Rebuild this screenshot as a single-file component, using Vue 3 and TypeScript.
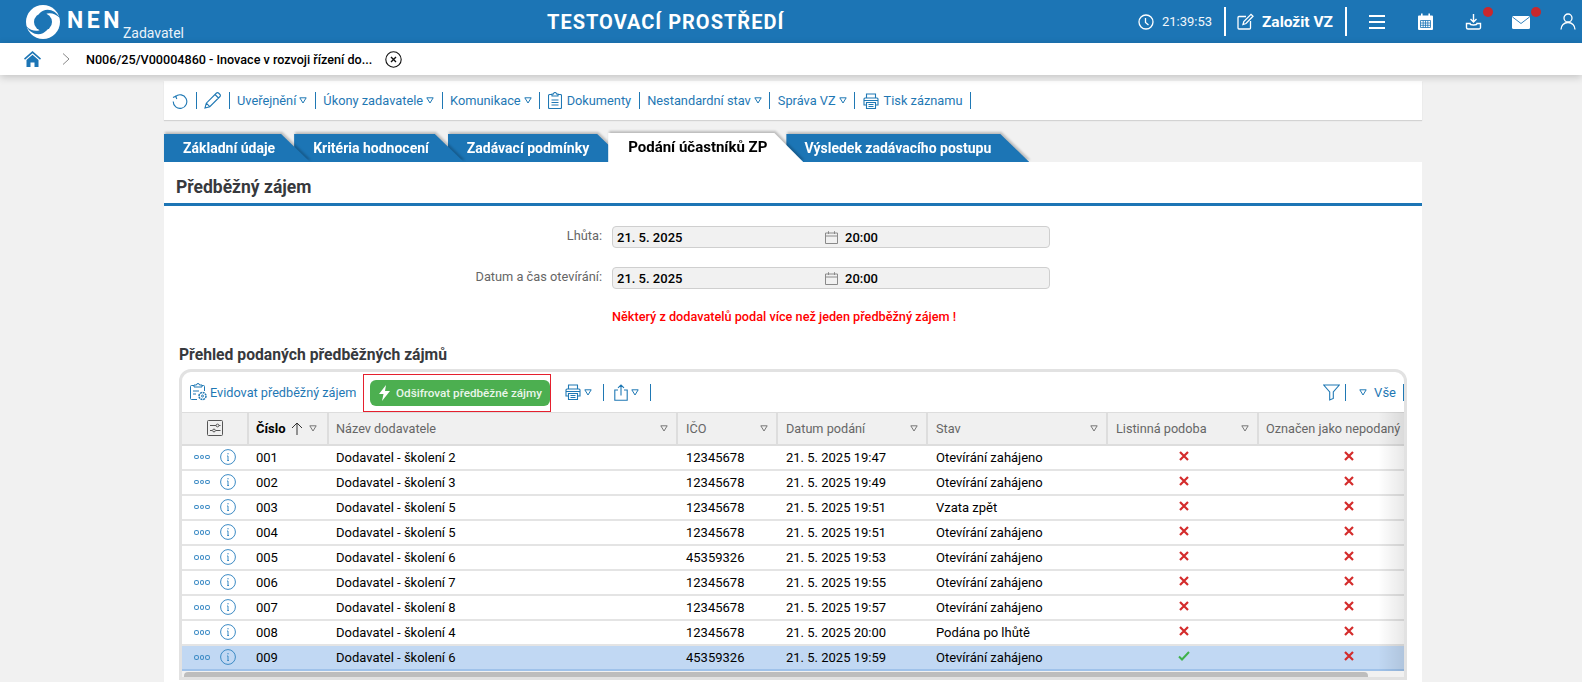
<script setup lang="ts">
interface Row { no: string; name: string; ico: string; date: string; state: string; paper: boolean; selected?: boolean }

const menu = [
  { label: 'Uveřejnění', tri: true, icon: '' },
  { label: 'Úkony zadavatele', tri: true, icon: '' },
  { label: 'Komunikace', tri: true, icon: '' },
  { label: 'Dokumenty', tri: false, icon: 'doc' },
  { label: 'Nestandardní stav', tri: true, icon: '' },
  { label: 'Správa VZ', tri: true, icon: '' },
  { label: 'Tisk záznamu', tri: false, icon: 'print' },
]

const tabs = [
  { label: 'Základní údaje', cls: 't1' },
  { label: 'Kritéria hodnocení', cls: 't2' },
  { label: 'Zadávací podmínky', cls: 't3' },
  { label: 'Podání účastníků ZP', cls: 't4 active' },
  { label: 'Výsledek zadávacího postupu', cls: 't5' },
]

const dates = [
  { label: 'Lhůta:', date: '21. 5. 2025', time: '20:00' },
  { label: 'Datum a čas otevírání:', date: '21. 5. 2025', time: '20:00' },
]

const columns = [
  { label: 'Název dodavatele', cls: 'c-name' },
  { label: 'IČO', cls: 'c-ico' },
  { label: 'Datum podání', cls: 'c-date' },
  { label: 'Stav', cls: 'c-state' },
  { label: 'Listinná podoba', cls: 'c-paper' },
]

const rows: Row[] = [
  { no: '001', name: 'Dodavatel - školení 2', ico: '12345678', date: '21. 5. 2025 19:47', state: 'Otevírání zahájeno', paper: false },
  { no: '002', name: 'Dodavatel - školení 3', ico: '12345678', date: '21. 5. 2025 19:49', state: 'Otevírání zahájeno', paper: false },
  { no: '003', name: 'Dodavatel - školení 5', ico: '12345678', date: '21. 5. 2025 19:51', state: 'Vzata zpět', paper: false },
  { no: '004', name: 'Dodavatel - školení 5', ico: '12345678', date: '21. 5. 2025 19:51', state: 'Otevírání zahájeno', paper: false },
  { no: '005', name: 'Dodavatel - školení 6', ico: '45359326', date: '21. 5. 2025 19:53', state: 'Otevírání zahájeno', paper: false },
  { no: '006', name: 'Dodavatel - školení 7', ico: '12345678', date: '21. 5. 2025 19:55', state: 'Otevírání zahájeno', paper: false },
  { no: '007', name: 'Dodavatel - školení 8', ico: '12345678', date: '21. 5. 2025 19:57', state: 'Otevírání zahájeno', paper: false },
  { no: '008', name: 'Dodavatel - školení 4', ico: '12345678', date: '21. 5. 2025 20:00', state: 'Podána po lhůtě', paper: false },
  { no: '009', name: 'Dodavatel - školení 6', ico: '45359326', date: '21. 5. 2025 19:59', state: 'Otevírání zahájeno', paper: true, selected: true },
]
</script>

<template>
  <div class="page">
    <header class="topbar">
      <div class="brand">
        <svg class="logo" viewBox="0 0 36 36" width="36" height="36">
          <circle cx="18" cy="18" r="17" fill="#fff" />
          <circle cx="18" cy="18" r="9" fill="#1c75b5" />
          <path d="M14 10C20 3 30 5 35 14 30 9 24 8 20 10.500z" fill="#1c75b5" />
          <path d="M22 26C16 33 6 31 1 22 6 27 12 28 16 25.500z" fill="#1c75b5" />
        </svg>
        <span class="nen">NEN</span>
        <span class="role">Zadavatel</span>
      </div>
      <div class="env">TESTOVACÍ PROSTŘEDÍ</div>
      <div class="top-right">
        <svg class="ic-clock" viewBox="0 0 16 16" width="16" height="16" fill="none" stroke="#fff" stroke-width="1.300">
          <circle cx="8" cy="8" r="7" /><path d="M7.500 4v4.500l3 2.500" />
        </svg>
        <span class="time">21:39:53</span>
        <i class="top-sep"></i>
        <svg class="ic-edit" viewBox="0 0 17 17" width="17" height="17" fill="none" stroke="#fff" stroke-width="1.300">
          <path d="M9 3.500H2a1 1 0 0 0-1 1V15a1 1 0 0 0 1 1h10.500a1 1 0 0 0 1-1V8" />
          <path d="M6 11.500l.8-3L14 1.300l2 2-7 7.200z" />
        </svg>
        <span class="create">Založit VZ</span>
        <i class="top-sep"></i>
        <span class="top-icon first">
          <svg viewBox="0 0 16 14" width="16" height="14" fill="#fff"><rect y="0" width="16" height="2" /><rect y="6" width="16" height="2" /><rect y="12" width="16" height="2" /></svg>
        </span>
        <span class="top-icon">
          <svg viewBox="0 0 17 17" width="17" height="17"><path d="M1 3.500a1 1 0 0 1 1-1h13a1 1 0 0 1 1 1V16a1 1 0 0 1-1 1H2a1 1 0 0 1-1-1z" fill="#fff" /><rect x="4" y="0.500" width="1.600" height="3.500" fill="#fff" /><rect x="11.400" y="0.500" width="1.600" height="3.500" fill="#fff" /><path d="M3.500 7.500h10v7h-10zM3.500 10h10M3.500 12.300h10M6.200 7.500v7M8.500 7.500v7M10.800 7.500v7" fill="none" stroke="#1c75b5" stroke-width=".8" /></svg>
        </span>
        <span class="top-icon">
          <svg viewBox="0 0 17 17" width="17" height="17" fill="none" stroke="#fff" stroke-width="1.400"><path d="M8.500 1v7.500M5.500 6l3 3 3-3" /><path d="M5 10.500H1.500v4a1.500 1.500 0 0 0 1.500 1.500h11a1.500 1.500 0 0 0 1.500-1.500v-4H12c0 2-7 2-7 0z" /></svg>
          <b class="dot"></b>
        </span>
        <span class="top-icon">
          <svg viewBox="0 0 18 14" width="18" height="14"><rect y="1" width="18" height="13" rx="1.500" fill="#fff" /><path d="M.5 2l8.500 6.500L17.500 2" fill="none" stroke="#1c75b5" stroke-width=".9" /></svg>
          <b class="dot"></b>
        </span>
        <span class="top-icon last">
          <svg viewBox="0 0 16 17" width="16" height="17" fill="none" stroke="#fff" stroke-width="1.300"><circle cx="8" cy="5" r="4" /><path d="M1 16.500c0-4 3-7 7-7s7 3 7 7" /></svg>
        </span>
      </div>
    </header>

    <nav class="crumbs">
      <svg class="home" viewBox="0 0 17 16" width="17" height="16" fill="#1c75b5">
        <path d="M8.500 0L0 7.500l1 1.200 7.500-6.500 7.500 6.500 1-1.200z" />
        <path d="M2.500 9l6-5.200 6 5.200v7H10.500v-4.500h-4V16h-4z" />
      </svg>
      <svg class="chev" viewBox="0 0 8 12" width="8" height="12" fill="none" stroke="#888" stroke-width="1"><path d="M1 .5l6 5.500-6 5.500" /></svg>
      <span class="crumb-text">N006/25/V00004860 - Inovace v rozvoji řízení do...</span>
      <svg class="crumb-close" viewBox="0 0 17 17" width="17" height="17" fill="none" stroke="#111" stroke-width="1.100"><circle cx="8.500" cy="8.500" r="7.700" /><path d="M6 6l5 5M11 6l-5 5" stroke-width="1.400" /></svg>
    </nav>

    <main class="main">
      <div class="toolbar">
        <svg class="tool-icon" viewBox="0 0 16 16" width="16" height="16" fill="none" stroke="#1f78b4" stroke-width="1.100"><path d="M3.500 3.500A6.800 6.800 0 1 1 1.200 8.500" /><path d="M1 4.500l2.700-1.300L4.800 6" /></svg>
        <i class="tool-sep"></i>
        <svg class="tool-icon" viewBox="0 0 17 17" width="17" height="17" fill="none" stroke="#1f78b4" stroke-width="1.100"><path d="M1 16l1.300-4.800L12.500 1a1.400 1.400 0 0 1 2 0l1.500 1.500a1.400 1.400 0 0 1 0 2L5.800 14.700zM2.300 11.200l3.500 3.500M11 2.500l3.500 3.500" /></svg>
        <i class="tool-sep"></i>
        <template v-for="item in menu" :key="item.label">
          <svg v-if="item.icon === 'doc'" class="item-icon" viewBox="0 0 14 17" width="14" height="17" fill="none" stroke="#1f78b4" stroke-width="1.100"><path d="M4 2.500H1.500a1 1 0 0 0-1 1V15.500a1 1 0 0 0 1 1h11a1 1 0 0 0 1-1V3.500a1 1 0 0 0-1-1H10" /><path d="M4 4V2h1.500a1.500 1.500 0 0 1 3 0H10v2zM3.500 8h7M3.500 10.500h7M3.500 13h7" /></svg>
          <svg v-if="item.icon === 'print'" class="item-icon" viewBox="0 0 16 16" width="16" height="16" fill="none" stroke="#1f78b4" stroke-width="1.100"><path d="M3.500 5V1h9v4M3.500 12H1V6a1 1 0 0 1 1-1h12a1 1 0 0 1 1 1v6h-2.500" /><path d="M3.500 9.500h9v6h-9zM5.500 11.500h5M5.500 13.500h5M1 7.500h14" /></svg>
          <span class="item-label">{{ item.label }}</span>
          <svg v-if="item.tri" class="tri blue" viewBox="0 0 8 7" width="8" height="7"><path d="M.8.800h6.400L4 6z" /></svg>
          <i class="tool-sep"></i>
        </template>
      </div>

      <div class="tabs">
        <div v-for="t in tabs" :key="t.label" class="tab" :class="t.cls">
          <span class="tab-face">{{ t.label }}</span>
        </div>
      </div>

      <section class="content">
        <h1 class="title">Předběžný zájem</h1>

        <div class="form">
          <div v-for="d in dates" :key="d.label" class="form-row">
            <label class="form-label">{{ d.label }}</label>
            <div class="date-input">
              <span class="date-val">{{ d.date }}</span>
              <svg class="cal" viewBox="0 0 13 13" width="13" height="13" fill="none" stroke="#8a8a8a" stroke-width="1"><path d="M.5 2h12v10.500H.5zM.5 5h12M3.500 .2V3M9.500 .2V3" /></svg>
              <span class="time-val">{{ d.time }}</span>
            </div>
          </div>
          <p class="warning">Některý z dodavatelů podal více než jeden předběžný zájem !</p>
        </div>

        <h2 class="sub">Přehled podaných předběžných zájmů</h2>

        <div class="widget">
          <div class="grid-bar">
            <svg class="ev-icon" viewBox="0 0 17 18" width="17" height="18" fill="none" stroke="#1f78b4" stroke-width="1"><path d="M4 2.500H1.500a1 1 0 0 0-1 1v12a1 1 0 0 0 1 1H7M12 2.500h1.500a1 1 0 0 1 1 1V8" /><path d="M4 4V2h2.500a1.500 1.500 0 0 1 3 0H12v2zM3 8h6M3 11h3" /><circle cx="12.500" cy="13" r="3.500" stroke-dasharray="2 .7" stroke-width="1.500" /><circle cx="12.500" cy="13" r="1" /></svg>
            <span class="ev-label">Evidovat předběžný zájem</span>
            <div class="action-frame">
              <button class="decrypt" type="button">
                <svg viewBox="0 0 11 16" width="11" height="16" fill="#fff"><path d="M7 0L0 9h4.500L3 16l8-10H6z" /></svg>
                <span>Odšifrovat předběžné zájmy</span>
              </button>
            </div>
            <svg class="bar-print" viewBox="0 0 16 16" width="16" height="16" fill="none" stroke="#1f78b4" stroke-width="1.100"><path d="M3.500 5V1h9v4M3.500 12H1V6a1 1 0 0 1 1-1h12a1 1 0 0 1 1 1v6h-2.500" /><path d="M3.500 9.500h9v6h-9zM5.500 11.500h5M5.500 13.500h5M1 7.500h14" /></svg>
            <svg class="tri blue bar-tri" viewBox="0 0 8 7" width="8" height="7"><path d="M.8.800h6.400L4 6z" /></svg>
            <i class="tool-sep bar-sep"></i>
            <svg class="bar-share" viewBox="0 0 14 17" width="14" height="17" fill="none" stroke="#1f78b4" stroke-width="1.100"><path d="M4 6H.8v10.200h12.400V6H10M7 11.500V1M4 3.800L7 1l3 2.800" /></svg>
            <svg class="tri blue bar-tri" viewBox="0 0 8 7" width="8" height="7"><path d="M.8.800h6.400L4 6z" /></svg>
            <i class="tool-sep bar-sep"></i>
            <svg class="filter" viewBox="0 0 17 17" width="17" height="17" fill="none" stroke="#1f78b4" stroke-width="1.100"><path d="M.7 1h15.600l-6 7v6.500L6.700 16V8z" /></svg>
            <i class="tool-sep filter-sep"></i>
            <svg class="tri blue all-tri" viewBox="0 0 8 7" width="8" height="7"><path d="M.8.800h6.400L4 6z" /></svg>
            <span class="all">Vše</span>
            <i class="tool-sep all-sep"></i>
          </div>

          <div class="table">
            <div class="tr head">
              <div class="th c-act">
                <svg viewBox="0 0 16 16" width="16" height="16" fill="none" stroke="#555" stroke-width="1"><rect x=".5" y=".5" width="15" height="15" rx="1" /><path d="M3 5.500h6M12 5.500h1.500M3 10.500h2M9 10.500h4.500" /><circle cx="10.500" cy="5.500" r="1.400" /><circle cx="7" cy="10.500" r="1.400" /></svg>
              </div>
              <div class="th c-no strong">
                <span>Číslo</span>
                <svg class="sort" viewBox="0 0 12 13" width="12" height="13" fill="none" stroke="#333" stroke-width="1"><path d="M6 13V1M1 6l5-5 5 5" /></svg>
                <svg class="tri gray" viewBox="0 0 8 7" width="8" height="7"><path d="M.8.800h6.400L4 6z" /></svg>
              </div>
              <div v-for="c in columns" :key="c.label" class="th spread" :class="c.cls">
                <span>{{ c.label }}</span>
                <svg class="tri gray" viewBox="0 0 8 7" width="8" height="7"><path d="M.8.800h6.400L4 6z" /></svg>
              </div>
              <div class="th c-flag nosep"><span>Označen jako nepodaný</span></div>
            </div>

            <div v-for="r in rows" :key="r.no" class="tr" :class="{ selected: r.selected }">
              <div class="td c-act">
                <span class="dots"><i></i><i></i><i></i></span>
                <svg class="info" viewBox="0 0 16 16" width="16" height="16" fill="none" stroke="#3b8ac4" stroke-width="1"><circle cx="8" cy="8" r="7.400" /><path d="M8 7v4.500M7 7h1M7.200 11.500h1.800" /><path d="M8 4.200v1" stroke-width="1.400" /></svg>
              </div>
              <div class="td c-no">{{ r.no }}</div>
              <div class="td c-name">{{ r.name }}</div>
              <div class="td c-ico">{{ r.ico }}</div>
              <div class="td c-date">{{ r.date }}</div>
              <div class="td c-state">{{ r.state }}</div>
              <div class="td c-paper center">
                <svg v-if="r.paper" viewBox="0 0 12 10" width="12" height="10" fill="none" stroke="#3fb24a" stroke-width="2"><path d="M1 5.500l3 3L11 1" /></svg>
                <svg v-else viewBox="0 0 10 10" width="10" height="10" fill="none" stroke="#d42b2b" stroke-width="2.200"><path d="M1 1l8 8M9 1l-8 8" /></svg>
              </div>
              <div class="td c-flag center">
                <svg viewBox="0 0 10 10" width="10" height="10" fill="none" stroke="#d42b2b" stroke-width="2.200"><path d="M1 1l8 8M9 1l-8 8" /></svg>
              </div>
            </div>
            <div class="fade"></div>
          </div>

          <div class="scroll"><div class="thumb"></div></div>
        </div>
      </section>
    </main>
  </div>
</template>

<style>
html, body { margin: 0; background: #f1f1f1; overflow: hidden; }
</style>

<style scoped>
.page { width: 1582px; height: 682px; overflow: hidden; font-family: Roboto, "Liberation Sans", sans-serif; font-size: 13px; color: #000; background: #f1f1f1; }

.topbar { height: 43px; background: #1c75b5; display: flex; align-items: center; color: #fff; }
.brand { width: 547px; flex: none; height: 43px; display: flex; position: relative; }
.logo { margin: 4px 0 0 25px; }
.nen { margin: 7px 0 0 6px; font-size: 23px; font-weight: 700; letter-spacing: 3.500px; line-height: 28px; }
.role { margin: 24px 0 0 0; font-size: 14px; line-height: 18px; color: #eaf3fa; }
.env { font-size: 20px; font-weight: 700; letter-spacing: 1px; }
.top-right { margin-left: auto; display: flex; align-items: center; height: 43px; }
.time { margin-left: 8px; font-size: 13px; color: #f2f7fb; width: 50px; }
.top-sep { width: 2px; height: 29px; background: #fff; margin-left: 12px; }
.ic-edit { margin-left: 11px; }
.create { margin-left: 8px; font-size: 15.500px; font-weight: 700; }
.top-icon { width: 48px; height: 43px; display: flex; align-items: center; justify-content: center; position: relative; }
.top-icon.first { margin-left: 6px; }
.top-icon.last { width: 37px; }
.top-icon.last svg { margin-left: 9px; }
.dot { position: absolute; width: 10px; height: 10px; border-radius: 50%; background: #c9282d; top: 7px; left: 34px; }

.crumbs { height: 32px; background: #fff; display: flex; align-items: center; box-shadow: 0 2px 8px rgba(0, 0, 0, .2); position: relative; padding-left: 24px; }
.chev { margin-left: 21px; }
.crumb-text { margin-left: 16px; font-weight: 500; font-size: 12.600px; width: 287px; white-space: nowrap; }
.crumb-close { margin-left: 12px; }

.main { width: 1258px; margin: 6px 0 0 164px; }
.toolbar { height: 39px; background: #fff; display: flex; align-items: center; box-shadow: 0 1px 1px rgba(0, 0, 0, .12); padding-left: 8px; color: #1f78b4; }
.tool-sep { width: 1px; height: 17px; background: #1f78b4; margin: 0 7.500px; flex: none; }
.item-label { white-space: nowrap; font-size: 12.800px; }
.item-icon { margin-right: 5px; }
.tri { flex: none; }
.tri path { fill: none; stroke-width: 1; }
.tri.blue { margin-left: 3px; }
.tri.blue path { stroke: #1f78b4; }
.tri.gray path { stroke: #777; }

.tabs { margin-top: 13px; height: 29px; display: flex; align-items: flex-end; }
.tab { position: relative; height: 28px; filter: drop-shadow(1px -1.500px 1px rgba(0, 0, 0, .22)); }
.tab-face { display: block; height: 100%; line-height: 29px; background: #1c75b5; color: #fff; font-weight: 700; font-size: 14px; white-space: nowrap; padding: 0 37px 0 19px; clip-path: polygon(0 0, calc(100% - 29px) 0, 100% 100%, 0 100%); }
.t1 { z-index: 5; }
.t2 { z-index: 4; margin-left: -16px; }
.t3 { z-index: 3; margin-left: -16px; }
.t4 { z-index: 6; margin-left: -18px; height: 29px; }
.t5 { z-index: 2; margin-left: -17px; }
.t1 .tab-face { padding-right: 35px; }
.t2 .tab-face { padding-right: 35px; }
.t4 .tab-face { background: #fff; color: #000; font-size: 15px; padding: 0 36px 0 20px; line-height: 29px; }
.t5 .tab-face { padding: 0 38px 0 18px; }

.content { background: #fff; height: 520px; padding-top: 0; position: relative; }
.title { margin: 0; height: 41px; line-height: 50px; padding-left: 12px; font-size: 17.500px; font-weight: 700; color: #37393d; border-bottom: 3px solid #1c75b5; box-sizing: content-box; }

.form { padding-top: 20px; }
.form-row { display: flex; align-items: center; height: 22px; margin-bottom: 19px; }
.form-label { width: 438px; text-align: right; color: #666; font-size: 12.800px; margin-top: -4px; }
.date-input { margin-left: 10px; width: 438px; height: 22px; box-sizing: border-box; border: 1px solid #cfcfcf; border-radius: 4px; background: #f1f1f1; display: flex; align-items: center; padding-left: 4px; font-weight: 500; font-size: 13px; }
.date-val { width: 208px; }
.time-val { margin-left: 7px; }
.warning { margin: 0 0 0 448px; color: #f00; font-weight: 500; font-size: 12.700px; line-height: 16px; padding-top: 1px; }

.sub { margin: 21px 0 0 15px; font-size: 15.700px; font-weight: 700; color: #37393d; line-height: 18px; }
.widget { margin: 5px 0 0 15px; width: 1228px; height: 311px; box-sizing: border-box; border: 3px solid #e2e2e2; border-radius: 12px 12px 0 0; overflow: hidden; background: #fff; }
.grid-bar { height: 40px; display: flex; align-items: center; color: #1f78b4; }
.ev-icon { margin-left: 8px; }
.ev-label { margin-left: 3px; font-size: 12.700px; width: 148px; white-space: nowrap; }
.action-frame { margin-left: 5px; height: 38px; margin-top: 1px; box-sizing: border-box; border: 1px solid #e5202e; padding: 6px 0 6px 6px; width: 188px; display: flex; align-items: center; }
.decrypt { width: 180px; height: 26px; flex: none; border: 0; border-radius: 6px; background: #4caf50; color: #e9f6ea; font: 500 11.700px Roboto, "Liberation Sans", sans-serif; display: flex; align-items: center; gap: 6px; padding: 0 0 0 9px; white-space: nowrap; }
.bar-print { margin-left: 14px; }
.bar-tri { margin-left: 6px; }
.bar-sep { margin: 0 10.500px; }
.filter { margin-left: auto; }
.filter-sep { margin: 0 10px 0 5px; }
.all-tri { margin-left: 0; }
.all { margin-left: 7px; font-size: 13px; }
.all-sep { margin: 0 0 0 7px; }

.table { position: relative; width: 1222px; overflow: hidden; }
.tr { display: grid; grid-template-columns: 67px 80px 349px 100px 150px 180px 151px 180px; height: 25.050px; box-sizing: border-box; border-bottom: 2px solid #e4e4e4; background: #fff; }
.tr.head { height: 33.500px; background: #f0f0f0; border-top: 1px solid #ddd; border-bottom: 2px solid #ddd; }
.tr.selected { background: #c1d8f3; border-bottom-color: #9fc2ea; }
.th { display: flex; align-items: center; padding-left: 8px; color: #666; font-size: 12.700px; border-right: 2px solid #ddd; white-space: nowrap; overflow: hidden; }
.th.spread { justify-content: space-between; padding-right: 8px; }
.th.nosep { border-right: 0; }
.th.c-act { justify-content: center; padding-left: 0; }
.th.strong { color: #000; font-weight: 700; font-size: 13px; }
.th.c-no, .th.c-name, .th.c-flag, .td.c-no, .td.c-name { padding-left: 7px; }
.sort { margin-left: 5px; }
.th.strong .tri { margin-left: 6px; }
.td { display: flex; align-items: center; padding-left: 8px; font-size: 13px; white-space: nowrap; }
.td.center { justify-content: center; padding-left: 0; padding-bottom: 2px; }
.td.c-act { padding-left: 12px; gap: 10px; }
.dots { display: flex; gap: 1px; width: 16px; }
.dots i { width: 4.700px; height: 4.700px; box-sizing: border-box; border: 1px solid #3b8ac4; border-radius: 50%; }
.fade { position: absolute; right: 0; top: 0; bottom: 0; width: 26px; background: linear-gradient(to right, rgba(0, 0, 0, 0), rgba(0, 0, 0, .09)); pointer-events: none; }
.scroll { height: 9px; padding: 1px 0 0 2px; background: #f1f1f1; }
.thumb { width: 1184px; height: 8px; border-radius: 4px; background: #bdbdbd; }
</style>
